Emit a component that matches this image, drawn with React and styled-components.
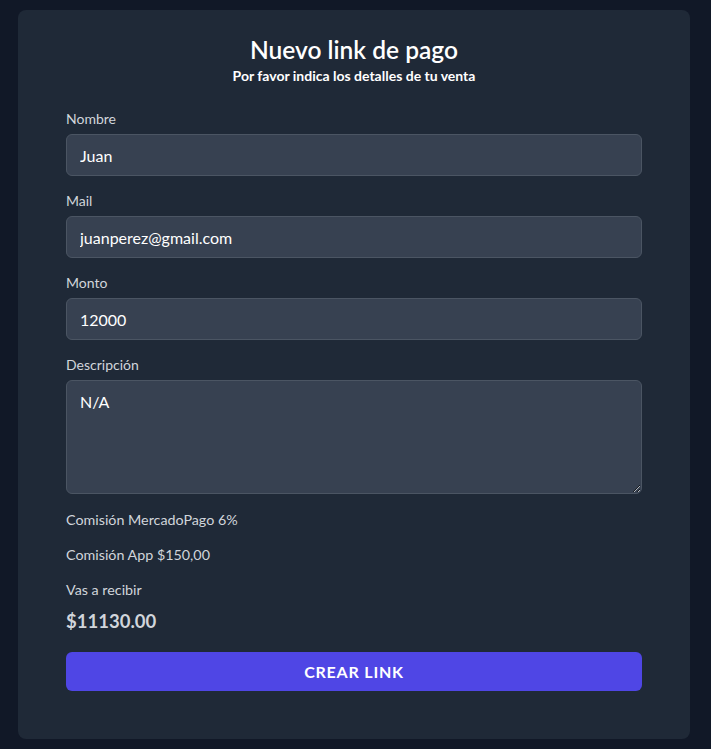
import styled, { createGlobalStyle } from "styled-components";

const GlobalStyle = createGlobalStyle`
    html, body {
        margin: 0;
        background-color: #111827;
        font-family: "Lato", "Noto Sans", sans-serif;
    }
    * {
        box-sizing: border-box;
    }
`;

const StyledPage = styled.div`
    padding: 10px 21px 10px 18px;
    min-height: 749px;
`;

const StyledCard = styled.form`
    width: 672px;
    background-color: #1f2937;
    border-radius: 8px;
    padding: 24px 48px 48px;
    display: flex;
    flex-direction: column;
`;

const StyledHeader = styled.div`
    text-align: center;
    margin-bottom: 23px;

    h1 {
        margin: 0;
        font-size: 24.5px;
        line-height: 32px;
        font-weight: 600;
        color: #ffffff;
    }

    p {
        margin: 0;
        font-size: 14px;
        line-height: 20px;
        font-weight: 700;
        color: #ffffff;
    }
`;

const StyledField = styled.label`
    display: flex;
    flex-direction: column;
    gap: 5px;
    margin-bottom: 15px;

    span {
        font-size: 14px;
        line-height: 20px;
        color: #d1d5db;
    }
`;

const StyledInput = styled.input`
    height: 42px;
    width: 100%;
    padding: 0 13px;
    background-color: #374151;
    border: 1px solid #4b5563;
    border-radius: 6px;
    color: #ffffff;
    font-family: inherit;
    font-size: 16px;
    outline: none;
`;

const StyledTextarea = styled.textarea`
    height: 114px;
    width: 100%;
    padding: 9px 13px;
    background-color: #374151;
    border: 1px solid #4b5563;
    border-radius: 6px;
    color: #ffffff;
    font-family: inherit;
    font-size: 16px;
    line-height: 24px;
    outline: none;
    resize: vertical;
`;

const StyledInfo = styled.p`
    margin: ${props => props.$first ? "1px" : "0"} 0 15px;
    font-size: 14.3px;
    line-height: 20px;
    color: #d1d5db;
`;

const StyledAmount = styled.p`
    margin: -8px 0 17px;
    font-size: 18.5px;
    line-height: 28px;
    font-weight: 700;
    color: #d1d5db;
`;

const StyledButton = styled.button`
    height: 39px;
    width: 100%;
    border: none;
    border-radius: 6px;
    background-color: #4f46e5;
    color: #ffffff;
    font-family: inherit;
    font-size: 16px;
    font-weight: 700;
    letter-spacing: 0.8px;
    cursor: pointer;
`;

function App() {
    return (
        <StyledPage>
            <GlobalStyle />
            <StyledCard onSubmit={(e) => e.preventDefault()}>
                <StyledHeader>
                    <h1>Nuevo link de pago</h1>
                    <p>Por favor indica los detalles de tu venta</p>
                </StyledHeader>

                <StyledField>
                    <span>Nombre</span>
                    <StyledInput defaultValue="Juan" />
                </StyledField>
                <StyledField>
                    <span>Mail</span>
                    <StyledInput defaultValue="juanperez@gmail.com" />
                </StyledField>
                <StyledField>
                    <span>Monto</span>
                    <StyledInput defaultValue="12000" />
                </StyledField>
                <StyledField>
                    <span>Descripción</span>
                    <StyledTextarea defaultValue="N/A" />
                </StyledField>

                <StyledInfo $first>Comisión MercadoPago 6%</StyledInfo>
                <StyledInfo>Comisión App $150,00</StyledInfo>
                <StyledInfo>Vas a recibir</StyledInfo>
                <StyledAmount>$11130.00</StyledAmount>

                <StyledButton type="submit">CREAR LINK</StyledButton>
            </StyledCard>
        </StyledPage>
    );
}

export default App;
